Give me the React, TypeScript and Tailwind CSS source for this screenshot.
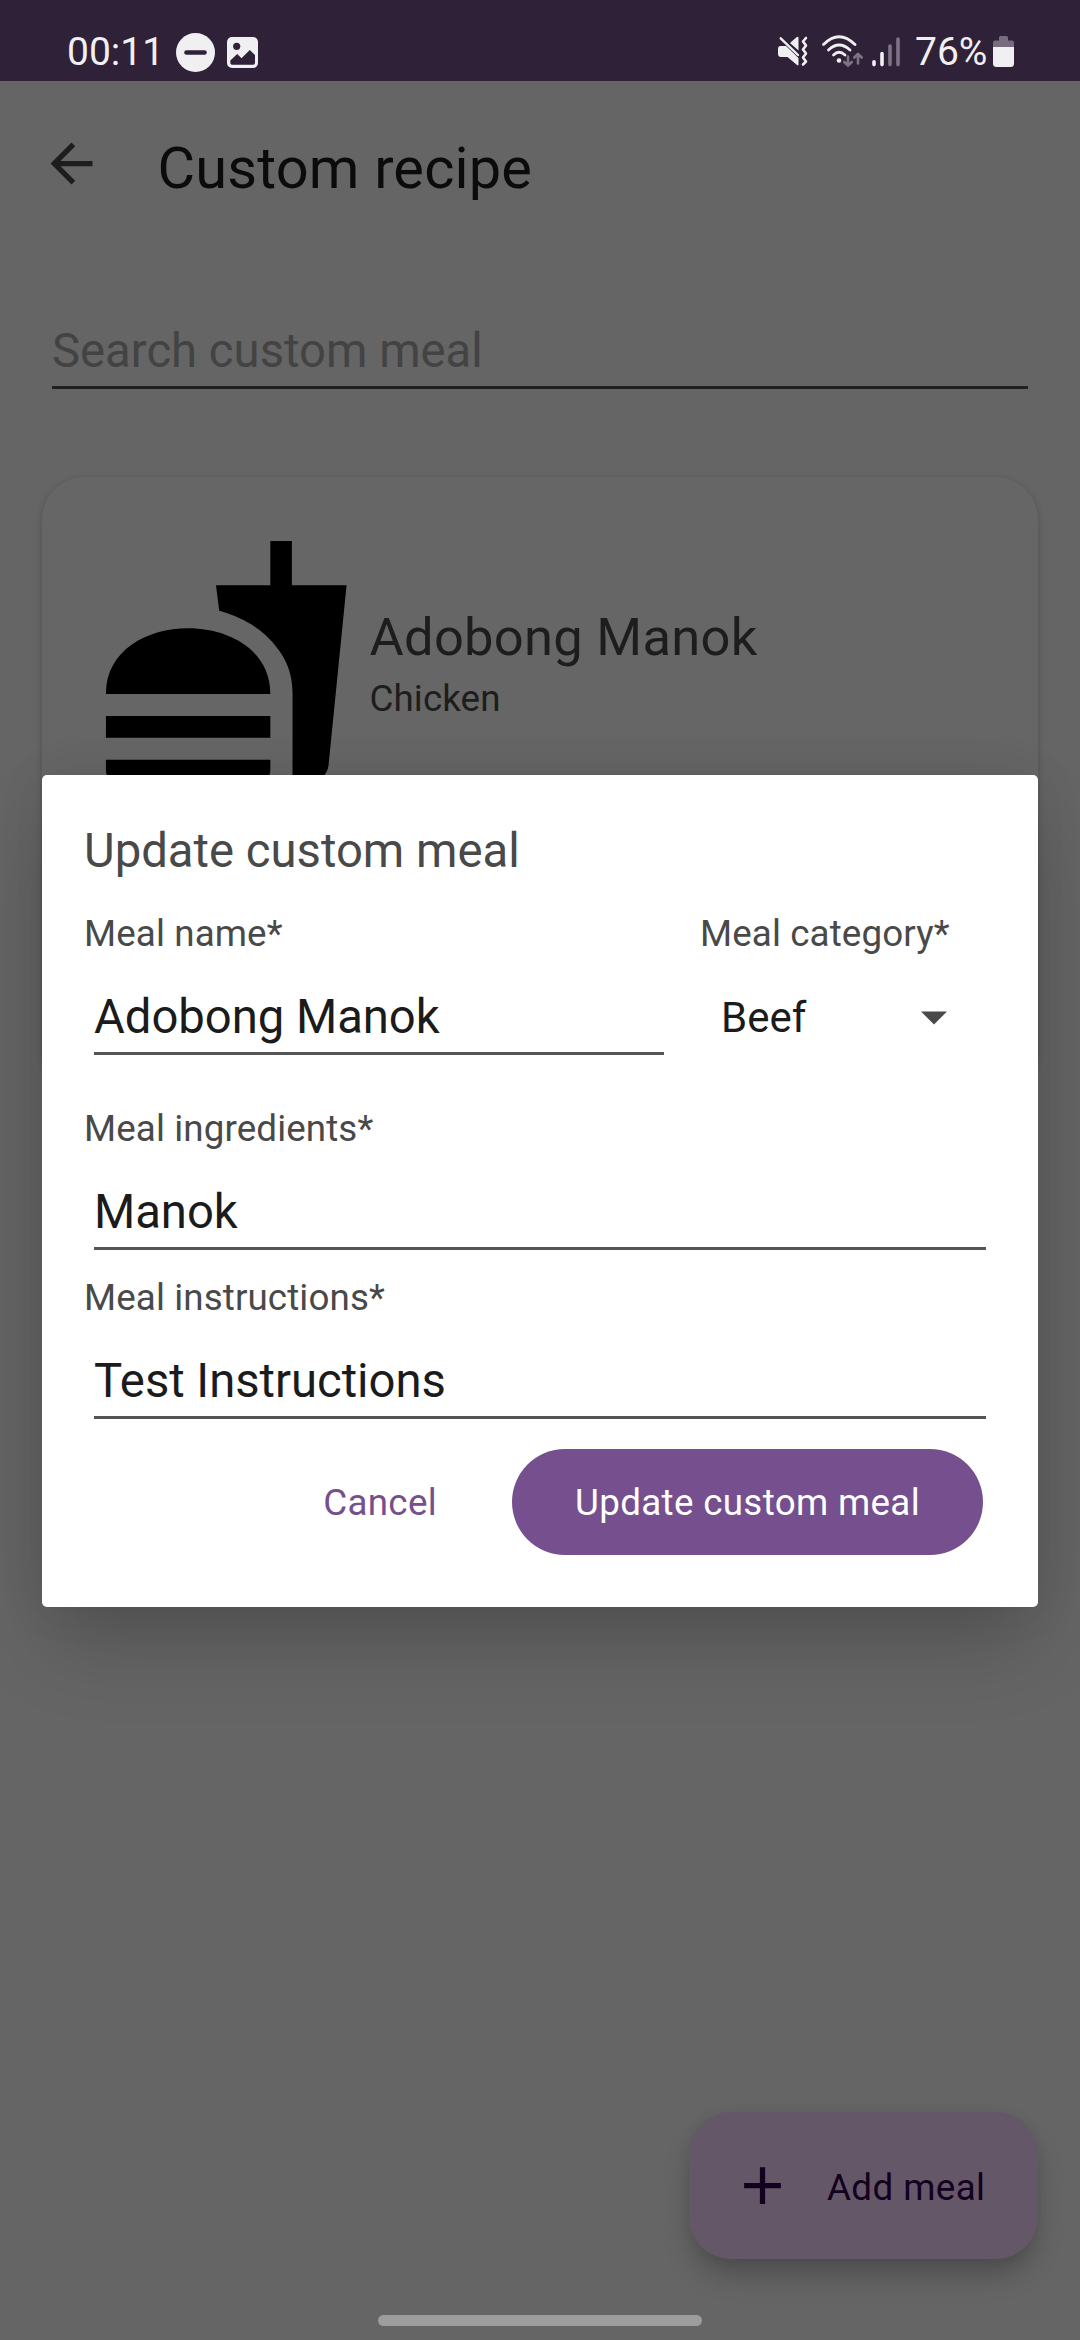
import type { ReactNode } from "react";

function StatusBar() {
  return (
    <header className="flex h-[81px] items-start bg-[#2f2138] text-[#f0eff2]">
      <div className="flex pt-[32px] pl-[67px]">
        <span className="w-[109px] text-[39px] leading-[40px]">00:11</span>
        <svg className="mt-[1px] h-[39px] w-[39px]" viewBox="0 0 39 39">
          <circle cx="19.5" cy="19.5" r="19.5" fill="#f0eff2" />
          <path d="M10.5 19.5h18" stroke="#2f2138" strokeWidth="4.6" strokeLinecap="round" />
        </svg>
        <svg className="mt-[5px] ml-[12px] h-[31px] w-[31px]" viewBox="0 0 31 31">
          <rect width="31" height="31" rx="5" fill="#f0eff2" />
          <circle cx="9.7" cy="9.3" r="3.6" fill="#2f2138" />
          <path
            d="M3.3 23.5L10.2 17l4.3 4.2L22.8 13l5.2 5v7.2q0 2.6-2.6 2.6H5.9q-2.6 0-2.6-2.6z"
            fill="#2f2138"
          />
        </svg>
      </div>
      <div className="ml-auto flex pt-[32px] pr-[66px]">
        <svg className="mt-[4px] h-[31px] w-[31px]" viewBox="0 0 31 31" fill="none">
          <path d="M2.5 10H8L20.5 22V28.5Q20.5 30 19 29L9.5 21H3Q0 21 0 18V13Q0 10 2.5 10z" fill="#f0eff2" />
          <path d="M12 7L18.5 1.3Q20.5 0 20.5 2V14.5z" fill="#f0eff2" />
          <path d="M2.7 2.3L20 19" stroke="#f0eff2" strokeWidth="2.4" strokeLinecap="round" />
          <path
            d="M28 2l-3 3.5 3 4-3 4 3 4-3 4 3 4-3 3"
            stroke="#f0eff2"
            strokeWidth="2.6"
            strokeLinecap="round"
            strokeLinejoin="round"
          />
        </svg>
        <svg className="mt-[3px] ml-[12px] h-[32px] w-[42px]" viewBox="0 0 42 32" fill="none">
          <g stroke="#f0eff2" strokeWidth="2.8" strokeLinecap="round">
            <path d="M2.5 9.6Q18 -6 34 9.6" />
            <path d="M7.5 15Q18 5 29 15" />
            <path d="M12.5 20Q18 14.5 24 20" />
          </g>
          <circle cx="18" cy="25.5" r="2.3" fill="#f0eff2" />
          <g stroke="#7e7385" strokeWidth="2.6" strokeLinecap="round" strokeLinejoin="round">
            <path d="M27 21.5v9M23.3 27l3.7 3.7 3.7-3.7" />
            <path d="M37 28.5v-9M33.3 22.5l3.7-3.7 3.7 3.7" />
          </g>
        </svg>
        <svg className="mt-[5px] ml-[9px] h-[30px] w-[28px]" viewBox="0 0 28 30" strokeWidth="3.6" strokeLinecap="round">
          <path d="M2 24.8v2.8M10 16.5v11.1" stroke="#f0eff2" />
          <path d="M18 9v18.6M26 2v25.6" stroke="#7e7385" />
        </svg>
        <span className="ml-[15px] w-[73px] text-[39px] leading-[40px] whitespace-nowrap">76%</span>
        <svg className="mt-[4px] ml-[5px] h-[31px] w-[21px]" viewBox="0 0 21 31">
          <path d="M6 4.5V1.5Q6 0 7.5 0h6Q15 0 15 1.5v3h4q2 0 2 2V12H0V6.5q0-2 2-2z" fill="#776c7e" />
          <path d="M0 11h21v16.500q0 3.500-3.500 3.500h-14Q0 31 0 27.500z" fill="#f0eff2" />
        </svg>
      </div>
    </header>
  );
}

function RecipeCard() {
  return (
    <article className="mx-[42px] mt-[88px] flex h-[612px] rounded-[42px] bg-[#666666] pl-[53px] text-[#1d1d1d] shadow-[0_2px_6px_rgba(0,0,0,0.22)]">
      <svg className="mt-[53px] h-[262.5px] w-[262.5px]" viewBox="0 0 24 24">
        <path d="M18.060 22.990h1.660c.84 0 1.530-.64 1.630-1.460L23 5.050h-5V1h-1.970v4.050h-4.970l.3 2.340c1.710.47 3.310 1.320 4.270 2.260 1.440 1.420 2.430 2.890 2.430 5.290v8.050zM1 21.990V21h15.030v.99c0 .55-.45 1-1.010 1H2.010c-.56 0-1.010-.45-1.010-1zm15.030-7c0-8-15.030-8-15.030 0h15.030zM1 17h15.030v2h-15.030z" />
      </svg>
      <div className="mt-[130px] ml-[12px]">
        <h2 className="text-[52.5px] leading-[60px] tracking-[0.27px]">Adobong Manok</h2>
        <p className="mt-[10px] text-[36.75px] leading-[44px] tracking-[0.1px]">Chicken</p>
      </div>
    </article>
  );
}

function Label({ children }: { children: ReactNode }) {
  return (
    <div className="text-[36.75px] leading-[46px] tracking-[0.12px] whitespace-nowrap text-[#494949]">
      {children}
    </div>
  );
}

function Field({ children }: { children: ReactNode }) {
  return (
    <div className="mt-[24px] ml-[10px] h-[74px] border-b-[3px] border-[#555555] pt-[8px] text-[47.25px] leading-[56px] tracking-[-0.04px] text-[#1b1b1b]">
      {children}
    </div>
  );
}

function UpdateDialog() {
  return (
    <section className="absolute top-[775px] left-[42px] h-[832px] w-[996px] rounded-[5px] bg-white pr-[52px] pl-[42px] shadow-[0_40px_80px_-8px_rgba(0,0,0,0.2),0_0_50px_rgba(0,0,0,0.07)]">
      <h2 className="pt-[48px] text-[47.25px] leading-[56px] text-[#494949]">Update custom meal</h2>
      <div className="mt-[32px] flex">
        <div className="w-[580px]">
          <Label>Meal name*</Label>
          <Field>Adobong Manok</Field>
        </div>
        <div className="ml-[36px]">
          <Label>Meal category*</Label>
          <div className="mt-[36px] ml-[21px] flex w-[226px] items-center justify-between text-[42px] leading-[50px] text-[#1b1b1b]">
            Beef
            <svg className="-mt-[1px] h-[14px] w-[26px]" viewBox="0 0 26 14">
              <path d="M0 0.5h26L13 13.5z" fill="#494949" />
            </svg>
          </div>
        </div>
      </div>
      <div className="mt-[51px]">
        <Label>Meal ingredients*</Label>
        <Field>Manok</Field>
      </div>
      <div className="mt-[25px]">
        <Label>Meal instructions*</Label>
        <Field>Test Instructions</Field>
      </div>
      <div className="mt-[30px] mr-[3px] flex h-[106px] justify-end text-[36.75px] leading-[44px] tracking-[0.33px]">
        <button className="mr-[75px] pt-[2px] text-[#754f8e]">Cancel</button>
        <button className="w-[471px] rounded-full bg-[#754f8e] pt-[2px] text-white">Update custom meal</button>
      </div>
    </section>
  );
}

export default function App() {
  return (
    <main className="relative flex h-[2340px] w-[1080px] flex-col overflow-hidden bg-[#656565] font-['Roboto',sans-serif]">
      <StatusBar />
      <div className="flex pt-[51px] pl-[39.5px]">
        <svg className="h-[63px] w-[63px]" viewBox="0 0 24 24" fill="#1d1d1d">
          <path d="M20 11H7.830l5.590-5.590L12 4l-8 8 8 8 1.410-1.410L7.830 13H20v-2z" />
        </svg>
        <h1 className="mt-[6px] ml-[55px] text-[57.75px] leading-[60px] tracking-[0.17px] text-[#0b0b0b]">
          Custom recipe
        </h1>
      </div>
      <div className="mx-[52px] mt-[128px] h-[63px] border-b-[3px] border-[#212121] text-[47.25px] leading-[50px] text-[#434343]">
        Search custom meal
      </div>
      <RecipeCard />
      <button className="mt-auto mr-[42px] flex h-[147px] w-[349px] items-center self-end rounded-[42px] bg-[#645768] pl-[42px] text-[#14001f] shadow-[0_18px_28px_-4px_rgba(0,0,0,0.25),0_0_12px_rgba(0,0,0,0.05)]">
        <svg className="h-[63px] w-[63px]" viewBox="0 0 24 24" fill="#14001f">
          <path d="M19 13h-6v6h-2v-6H5v-2h6V5h2v6h6v2z" />
        </svg>
        <span className="mt-[4px] ml-[33px] text-[36.75px] leading-[44px] tracking-[0.4px]">Add meal</span>
      </button>
      <div className="mt-[56px] mb-[14px] h-[11px] w-[324px] self-center rounded-full bg-[#9d9d9d]" />
      <UpdateDialog />
    </main>
  );
}
